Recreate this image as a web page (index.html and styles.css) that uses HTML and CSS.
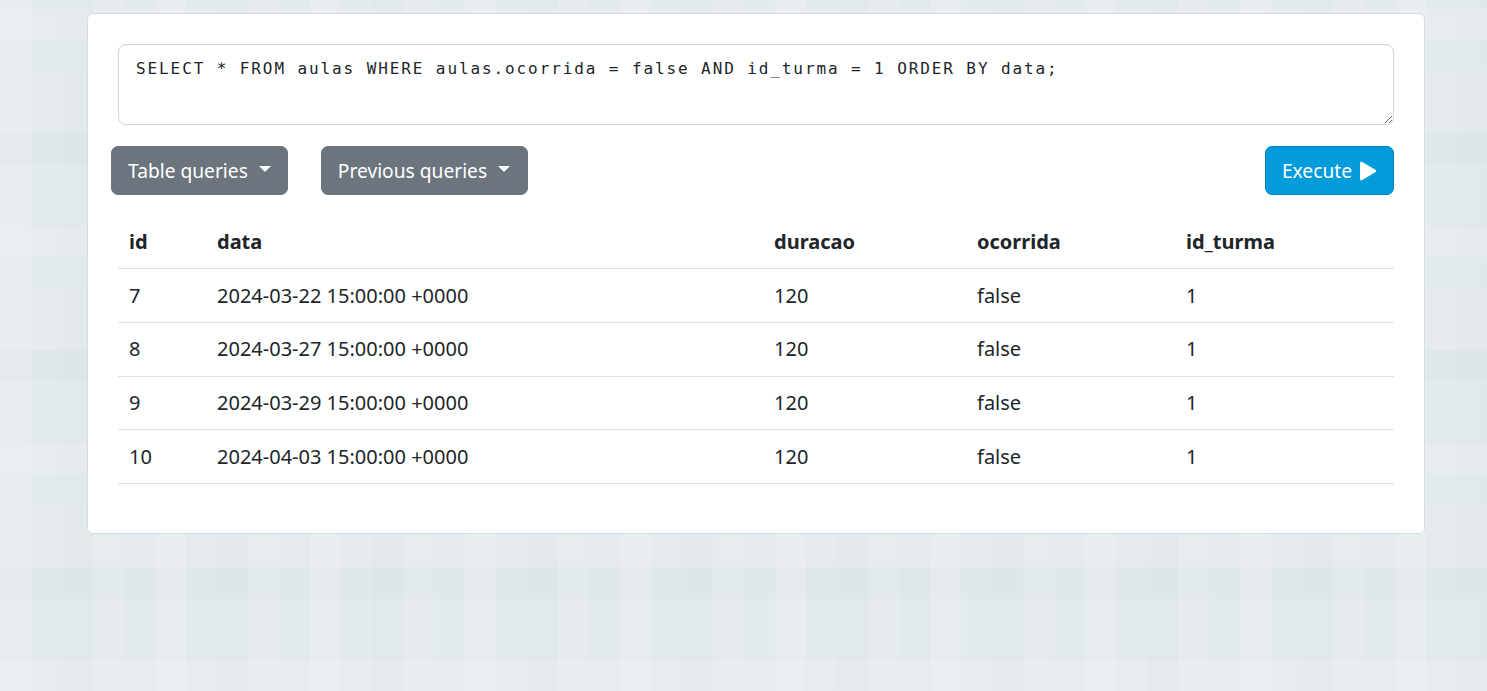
FILE: index.html
```html
<!DOCTYPE html>
<html lang="pt">
<head>
<meta charset="utf-8">
<title>SQL</title>
<link rel="stylesheet" href="styles.css">
</head>
<body>
<main class="card">
  <textarea class="query" spellcheck="false">SELECT * FROM aulas WHERE aulas.ocorrida = false AND id_turma = 1 ORDER BY data;</textarea>
  <div class="toolbar">
    <div class="left-group">
      <button class="btn btn-gray">Table queries <span class="caret"></span></button>
      <button class="btn btn-gray btn-prev">Previous queries <span class="caret"></span></button>
    </div>
    <button class="btn btn-exec">Execute <svg class="play" viewBox="0 0 20 20" width="20" height="20"><path d="M3 2.2c0-1.3 1.2-1.9 2.3-1.3l13 7.8c1 .6 1 2 0 2.6l-13 7.8C4.2 19.8 3 19.2 3 17.9z" fill="#fff"/></svg></button>
  </div>
  <table class="results">
    <thead>
      <tr><th class="c-id">id</th><th class="c-data">data</th><th class="c-dur">duracao</th><th class="c-oc">ocorrida</th><th class="c-turma">id_turma</th></tr>
    </thead>
    <tbody>
      <tr><td>7</td><td>2024-03-22 15:00:00 +0000</td><td>120</td><td>false</td><td>1</td></tr>
      <tr><td>8</td><td>2024-03-27 15:00:00 +0000</td><td>120</td><td>false</td><td>1</td></tr>
      <tr><td>9</td><td>2024-03-29 15:00:00 +0000</td><td>120</td><td>false</td><td>1</td></tr>
      <tr><td>10</td><td>2024-04-03 15:00:00 +0000</td><td>120</td><td>false</td><td>1</td></tr>
    </tbody>
  </table>
</main>
</body>
</html>
```

FILE: styles.css
```css
html, body {
  margin: 0;
  padding: 0;
}
body {
  min-height: 691px;
  font-family: "Noto Sans", "Open Sans", sans-serif;
  color: #212529;
  background-color: #e3eaed;
  background-image:
    repeating-linear-gradient(90deg, rgba(255,255,255,0.14) 0 31px, transparent 31px 62px, rgba(0,0,0,0.008) 62px 93px, rgba(255,255,255,0.07) 93px 124px, transparent 124px 155px),
    repeating-linear-gradient(0deg, rgba(255,255,255,0.11) 0 31px, transparent 31px 93px, rgba(0,0,0,0.012) 93px 124px, rgba(255,255,255,0.06) 124px 186px, transparent 186px 217px);
  overflow: hidden;
}
.card {
  box-sizing: border-box;
  width: 1338px;
  margin: 13px 0 0 87px;
  padding: 30px 30px 49px;
  background: #fff;
  border: 1px solid #d3dde3;
  border-radius: 6px;
}
.query {
  display: block;
  box-sizing: border-box;
  width: 100%;
  height: 81px;
  margin: 0;
  padding: 12px 16px 12px 17px;
  font-family: "DejaVu Sans Mono", "Liberation Mono", monospace;
  font-size: 16px;
  letter-spacing: 1.9px;
  line-height: 24px;
  color: #212529;
  border: 1px solid #ced4da;
  border-radius: 8px;
  resize: vertical;
  outline: none;
}
.toolbar {
  display: flex;
  justify-content: space-between;
  align-items: center;
  margin: 21px 0 0 -7px;
}
.left-group {
  display: flex;
  gap: 33px;
}
.btn {
  display: inline-flex;
  align-items: center;
  box-sizing: border-box;
  height: 49px;
  padding: 0 16px;
  font-family: "Noto Sans", "Open Sans", sans-serif;
  font-size: 19.2px;
  color: #fff;
  border-radius: 7px;
  cursor: pointer;
}
.btn-gray {
  background: #6c757d;
  border: 1px solid #6c757d;
}
.btn-prev {
  padding-right: 17px;
}
.caret {
  display: inline-block;
  width: 0;
  height: 0;
  margin-left: 11px;
  border-top: 6px solid #fff;
  border-left: 6px solid transparent;
  border-right: 6px solid transparent;
  position: relative;
  top: -2px;
}
.btn-exec {
  background: #039bd9;
  border: 1px solid #0284b9;
}
.play {
  margin-left: 5px;
}
.results {
  width: 100%;
  margin-top: 21px;
  border-collapse: collapse;
  font-size: 20px;
  line-height: 30px;
}
.results th, .results td {
  text-align: left;
  padding: 11.6px 11px 11.2px;
  border-bottom: 1px solid #dee2e6;
}
.results th {
  font-weight: 700;
  padding: 11px;
}
.c-id { width: 66px; }
.c-data { width: 535px; }
.c-dur { width: 181px; }
.c-oc { width: 187px; }
```
